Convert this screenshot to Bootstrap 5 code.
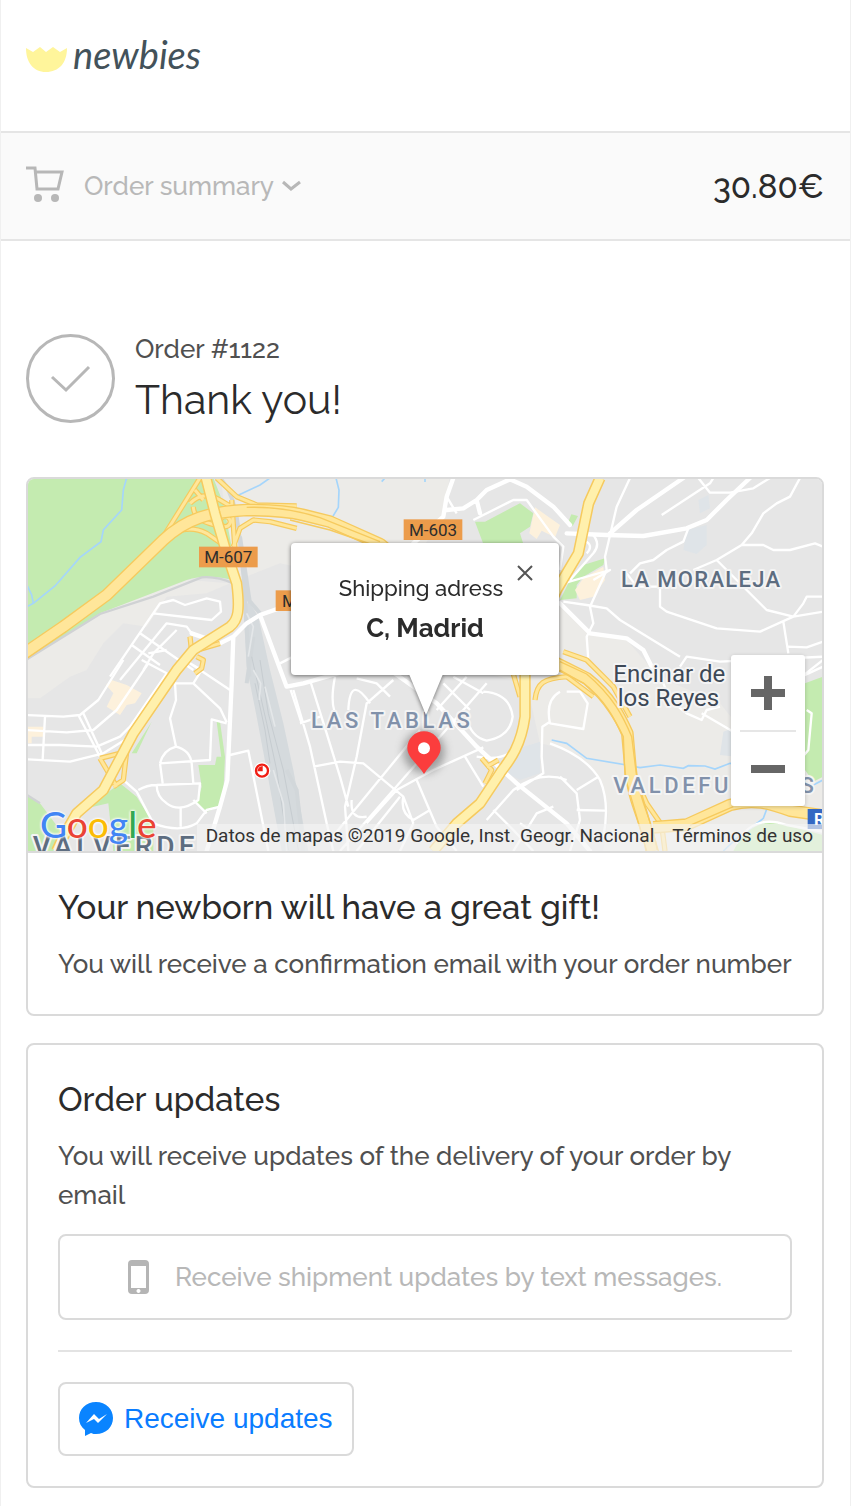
<!DOCTYPE html>
<html lang="en">
<head>
<meta charset="utf-8">
<meta name="viewport" content="width=device-width, initial-scale=1">
<title>newbies – Thank you!</title>
<link href="https://cdn.jsdelivr.net/npm/bootstrap@5.3.0/dist/css/bootstrap.min.css" rel="stylesheet">
<style>
  :root { --line: #dadada; --muted: #b8b8b8; --ink: #2b2b2b; --soft: #505050; }
  body { font-family: Raleway, Lato, sans-serif; font-size: 26px; font-weight: 500; line-height: 39px; color: var(--soft); background: #fff; }
  .page { border: solid #f0f0f0; border-width: 0 1px; min-height: 100vh; }
  .gutter { padding-left: 25px; padding-right: 26px; }
  .site-head { height: 131px; padding-top: 26px; }
  .brand { color: #43525a; font: italic 400 38px/56px Lato, cursive; gap: 6px; }
  .brand svg { margin-top: 12px; }
  .order-bar { background: #fafafa; border: solid #e5e5e5; border-width: 2px 0; height: 110px; }
  .order-bar .toggle { color: var(--muted); gap: 20px; background: none; border: 0; padding: 0; font-weight: 500; }
  .order-bar .cart { margin-bottom: 6px; }
  .price { font-size: 33px; color: var(--ink); }
  .thanks { padding-top: 93px; padding-bottom: 47px; gap: 20px; }
  .thanks .order-no { line-height: 30px; }
  .thanks h1 { font-size: 41px; line-height: 60px; color: var(--ink); font-weight: 400; margin: 6px 0 0; }
  .panel { border: 2px solid var(--line); border-radius: 8px; overflow: hidden; }
  .panel + .panel { margin-top: 27px; }
  .panel-pad { padding: 30px; }
  .panel h2 { font-size: 33px; line-height: 50px; color: var(--ink); font-weight: 500; margin: 0 0 12px; }
  .map { height: 374px; border-bottom: 2px solid var(--line); background: #e6e6e6; }
  .map-art { width: 100%; height: 100%; display: block; font-family: Roboto, sans-serif; font-weight: 400; }
  .bubble { left: 50%; top: 64px; width: 268px; height: 132px; transform: translateX(-50%); background: #fff; border-radius: 4px; padding-top: 27px; color: var(--ink); font-size: 22px; line-height: 36px; filter: drop-shadow(0 1px 2px rgba(0,0,0,.55)); }
  .bubble .street { padding-right: 8px; }
  .bubble strong { font-size: 26px; line-height: 44px; font-weight: 700; }
  .bubble .tail { left: 118px; top: 131px; }
  .bubble .shut { top: 22px; right: 26px; width: 16px; height: 16px; }
  .bare { background: none; border: 0; padding: 0; display: flex; align-items: center; justify-content: center; }
  .zoomer { right: 17px; bottom: 45px; width: 74px; background: #fff; border-radius: 3px; box-shadow: 0 1px 4px rgba(0,0,0,.2); padding: 0 9px; }
  .zoomer .bare { width: 100%; height: 75px; }
  .zoomer .bare + .bare { border-top: 2px solid #e6e6e6; height: 76px; }
  .g-logo { left: 12px; bottom: 4px; font: 500 37px/46px Lato, sans-serif; text-shadow: 0 0 3px #fff, 0 0 3px #fff, 0 0 2px #fff; }
  .credit { font: 400 19px/24px Roboto, sans-serif; color: #333; background: rgba(245,245,245,.65); padding: 0 9px 3px; gap: 18px; right: 0; bottom: 0; }
  .credit a { color: inherit; text-decoration: none; }
  .btn-box { border: 2px solid var(--line); border-radius: 8px; background: #fff; }
  .btn-sms { height: 86px; margin-top: 19px; color: var(--muted); gap: 26px; font-weight: 500; }
  .rule { height: 2px; background: #e3e3e3; margin: 30px 0; }
  .btn-msg { height: 74px; padding: 0 19px; color: #0a7cff; font: 400 28px/40px "Liberation Sans", Arial, sans-serif; gap: 11px; }
</style>
</head>
<body>
<div class="page">
  <header class="site-head gutter">
    <a href="#" class="brand d-inline-flex align-items-center text-decoration-none" aria-label="newbies">
      <svg width="41" height="26" viewBox="0 0 41 26" aria-hidden="true"><path d="M0 1 7 5 14 0 20 5 27 0 34 5 41 1C41 16 33 25 20 25S0 15 0 1Z" fill="#fff59b"/></svg>
      <span>newbies</span>
    </a>
  </header>

  <section class="order-bar gutter d-flex align-items-center justify-content-between">
    <button type="button" class="toggle d-flex align-items-center">
      <svg class="cart" width="38" height="37" viewBox="0 0 38 37" fill="none" stroke="#b7b7b7" stroke-width="3" aria-hidden="true"><path d="M0 3H9L11 24H32L36 7H9"/><circle cx="12" cy="33" r="4" fill="#b7b7b7" stroke="none"/><circle cx="29" cy="33" r="4" fill="#b7b7b7" stroke="none"/></svg>
      <span class="d-flex align-items-center gap-2">Order summary
        <svg width="19" height="12" viewBox="0 0 19 12" fill="none" stroke="#b7b7b7" stroke-width="3" aria-hidden="true"><path d="M1 2 9 9 18 2"/></svg></span>
    </button>
    <span class="price">30.80€</span>
  </section>

  <main class="gutter pb-3">
    <section class="thanks d-flex align-items-start">
      <svg width="89" height="89" viewBox="0 0 89 89" fill="none" stroke="#b7b7b7" stroke-width="3" aria-hidden="true"><circle cx="44.500" cy="44.500" r="43"/><path d="M26 43 40 56 63 33"/></svg>
      <div><div class="order-no">Order #1122</div><h1>Thank you!</h1></div>
    </section>

    <section class="panel">
      <div class="map position-relative overflow-hidden">
        <svg class="map-art" viewBox="21 27 2388 1116" preserveAspectRatio="xMidYMid slice" aria-label="Map of northern Madrid">
          <defs>
            <path id="ramps" d="M540 24 430 200M590 24 650 80 710 105 830 108M440 200Q500 160 560 190L625 235M640 230 660 175 700 150 750 155 830 175M510 100Q550 60 600 90L650 120M525 60 550 90M520 110Q520 150 585 165M635 90 645 240M615 140a15 15 0 1 0 1 0M510 500 515 545 600 520M530 560 550 570 545 595 525 610M240 865 320 845 310 930 280 950M240 865 290 950M1385 865 1415 900 1395 940M1435 870 1400 890M1545 690C1550 640 1570 625 1640 620L1720 680M1630 545 1700 570 1780 650 1830 740M1820 870 1880 1000 1925 1065 1935 1143M1480 612 1500 680"/>
            <path id="ring" d="M10 552 130 470 260 375 430 210C500 145 570 125 680 120 740 120 810 125 850 135L930 155 1080 222 1400 480 1620 585 1700 625C1770 680 1800 740 1822 790L1832 900C1840 1000 1880 1050 1895 1143M1900 1072 2000 1064 2130 1005C2200 985 2250 1000 2310 1022L2400 1035"/>
            <path id="radial" d="M558 24 585 130 620 250 650 340C660 420 655 450 630 470L520 540 470 600 340 790 250 960 170 1030 130 1100 110 1143M1740 24 1706 100 1675 250 1610 360 1515 560V740C1500 850 1450 890 1440 910L1380 1000 1310 1060 1240 1143"/>
          </defs>
          <rect x="-500" width="3500" height="1200" fill="#e6e6e6"/>
          <g fill="#ecebe8">
            <path d="M600 0H1290L1280 110 1250 170 1190 260 830 290 780 280 640 335Z"/>
            <path d="M21 570 240 430 500 330 630 340 560 370 440 380 380 470 310 460 250 520 200 600 150 620 60 685H21Z"/>
            <path d="M1400 560 1610 400 1710 490 1820 510 1890 590 1960 640 2100 700 2140 750 2409 760V1143H1750Q1780 1000 1740 930 1700 850 1560 820L1520 640 1400 610Z"/>
          </g>
          <g fill="#dfe4e8"><path d="M2110 785 2150 770V860L2100 855ZM2000 180 2060 165V225L2030 252 1990 240ZM1480 840 1560 815V910L1500 930 1460 910ZM2035 90l30-15 5 40-30 15Z"/></g>
          <g fill="#c4ebb0">
            <path d="M21 24H580L610 100 655 335Q570 308 500 330L240 430 21 570Z"/>
            <path d="M1365 155H1395L1500 100 1540 130 1530 170 1500 190 1510 222H1390Z"/>
            <path d="M1690 285 1755 265 1750 285 1690 320 1670 345V385L1620 390 1650 330ZM1658 168l-14-10 10-25 20 5Z"/>
            <path d="M200 1015 300 940 350 980 400 1060V1143H280L265 1000ZM21 978 60 1000 120 1080 110 1143H21ZM535 885H585L590 860H615L610 970 600 1010 560 1025 530 1000 545 950ZM590 755H600L615 860 605 870ZM395 755 350 850H335Z"/>
            <path d="M2355 640 2409 620V920L2380 935 2355 900ZM2140 1143Q2180 1060 2260 1055L2409 1095V1143Z"/>
          </g>
          <g fill="#fdf1dc"><path d="M1545 112 1620 165 1605 202 1565 182 1550 207 1528 190ZM1690 325 1750 290 1755 330 1720 380 1680 390 1665 360ZM275 630 320 645 365 670 345 700 320 705 300 735 260 710 280 670 258 645ZM21 770H70V800H35V820H21Z"/></g>
          <g fill="none" stroke="#d0d2d4" stroke-width="7"><path d="M21 568 240 432 400 380 545 322Q590 318 640 340M21 975 60 1000"/></g>
          <path d="M690 400 715 440 750 600 790 760 820 900 865 1143H785L740 900 710 740 680 590 670 400Z" fill="#d5dadd"/>
          <g fill="none" stroke="#d2d7da" stroke-width="12"><path d="M600 24C660 90 655 200 672 330L688 620M660 200 690 400M670 370 720 430M700 500 680 640M800 900 830 960 850 1143"/></g>
          <g fill="none" stroke="#c6ccd0" stroke-width="3"><path d="M695 560 740 760 770 900 805 1140M720 570 745 730 790 900 835 1140M705 640 735 780 750 880"/></g>
          <g fill="none" stroke="#e4e7e9" stroke-width="5"><path d="M680 430 700 470 685 560M700 600 722 640 718 690M735 650 765 770M760 900 790 1000 800 1143"/></g>
          <g fill="none" stroke="#a5d5fb" stroke-width="5"><path d="M320 24 310 60 305 120 250 180 243 215 180 262 105 348 40 400 21 410M21 345 35 375 40 400M750 24 720 45 645 80M948 24 957 60 955 112 935 145M1085 35 1095 24M1215 24V36M1595 810 1640 820 1700 865 1820 885 1860 893 1920 885 1990 895 2005 887 2055 888 2085 897 2130 880 2200 885M2409 930 2380 945M2240 1018 2230 1045 2150 1105 2110 1143"/></g>

          <g fill="none" stroke="#fff" stroke-width="7" stroke-linejoin="round">
            <path d="M270 620 420 400 460 390 495 405 560 385 600 395 603 425 575 450 400 430M300 630 440 460 500 470 515 490M360 490 520 600M335 525 420 585M385 550 440 540 M370 600 400 550 470 480"/>
            <path d="M780 580 820 560M310 570 235 690 180 735 130 740 21 735M365 570 440 610 330 770 300 800 230 830 120 825 21 825M385 580 290 720 220 780 140 787 21 780M330 800 250 850 150 875 21 868M75 740 68 868M175 735 240 860M190 730 245 850"/>
            <path d="M465 640H520L600 715 620 757M520 640 545 600 510 580 630 660M465 640 468 690 450 745 468 830M420 880Q430 840 468 830 510 840 515 880L520 940M420 880 570 870 575 748 620 760M420 880 428 940M355 960Q380 945 410 945L540 940 535 990Q480 1030 440 1000 410 980 410 945M310 930 350 965 400 1060Q480 1090 530 1060L560 1020 600 1010M482 1010V1070M520 990 560 1030M630 855 685 842 745 1143M812 660 845 760"/>
            <path d="M820 660 870 830 920 1060 940 1143M870 630 920 790 960 920 985 1010M945 620Q925 720 960 750M1050 700Q990 610 985 720M1010 625 1070 640 1110 680M1120 630 1040 700 1010 860 975 1010 985 1143M1200 780 930 1110M1260 800 960 1143M1130 960 1040 1060M1140 980 1010 1143M840 760 900 740M880 890 960 875 1030 880 1150 980 1180 1060M1130 960 1240 900 1390 832M1190 930 1250 1070 1310 1143M1150 980Q1140 1030 1180 1050L1230 1020M995 990Q990 1050 1040 1040M1335 860 1390 950M1180 1060 1140 1143"/>
            <path d="M1270 640 1350 720M1300 620 1390 670M1340 620 1250 720M1400 640 1260 800M1390 665Q1470 670 1478 740 1470 800 1400 812 1350 800 1340 740M1370 860Q1480 880 1500 800M1400 1050 1480 960Q1560 900 1640 930M1420 1020 1480 1080 1540 1143M1480 1143 1550 1030 1600 1010M1500 1060 1560 1100M1620 665Q1575 690 1590 760L1690 777 1703 700 1680 665 1640 665M1590 755 1567 770 1565 860 1570 910 1490 960"/>
            <path d="M1590 820Q1700 860 1740 930 1770 1000 1750 1100M1620 920 1670 970 1680 1050 1650 1143M1670 960 1735 920M1670 1020 1755 1022M1360 150 1480 90 1520 90 1600 200 1630 230 1620 300M1280 80 1310 130"/>
            <path d="M1830 24 1790 110 1755 260 1760 300 1710 410 1720 460 1700 500 1705 570M1925 135 2070 40 2080 24M2035 24 2070 68 2130 68 2200 55 2250 24M2340 24 2310 80 2270 100 2230 130 2195 190 2165 225 2090 270 2020 300M2165 225H2230L2260 240 2310 240 2385 220 2409 230M2090 270 2120 300 2240 420 2320 440 2409 425M2320 440 2350 400 2360 380H2409M2320 440 2220 485 2090 475 1940 425 1920 410V350H1850L1820 310M2290 455 2305 550M2305 530 2360 532 2409 515M2005 175 1990 215 1940 240 1900 270 1860 280 1830 310M1630 395 1700 405 1760 415 1800 450 1980 560M1980 590 2000 560 2100 575 2409 560M2409 590 2300 640"/>
            <path d="M1900 600 1930 640 1950 690 2000 730 2045 750 2060 720 2100 710M2045 730 2140 785M2360 720 2375 730 2365 840 2340 870M2409 570 2320 640M1630 340 1770 300 1720 330M1715 190Q1745 220 1720 250L1650 330M1700 215Q1720 230 1700 250M2150 1120Q2200 1030 2300 1065L2409 1085"/>
          </g>
          <g fill="none" stroke="#fff" stroke-width="13" stroke-linejoin="round" stroke-linecap="round">
            <path d="M515 490 600 520 640 500 680 460 720 435 820 400M640 500 635 640 622 930 600 1010 560 1143M720 435 800 650 850 640 990 600"/>
            <path d="M1110 600 1250 700 1370 830 1490 940 1640 1060 1710 1143M1300 24 1280 80 1270 140 1180 220M1280 120 1330 115 1370 90 1400 60 1470 28 1520 50 1600 110 1650 165M1370 90l10 40M1640 190 1760 195 1870 198 2000 175 2060 150 2120 90 2190 24M1770 190 1850 120 1990 24M1620 400 1710 490 1820 505 1870 540 1900 600"/>
          </g>
          <g fill="none" stroke-linejoin="round">
            <use href="#ramps" stroke="#f6ca5e" stroke-width="16"/>
            <use href="#ramps" stroke="#ffe69a" stroke-width="9"/>
            <use href="#ring" stroke="#f6ca5e" stroke-width="38"/>
            <use href="#ring" stroke="#ffe69a" stroke-width="30"/>
            <use href="#radial" stroke="#f6ca5e" stroke-width="34"/>
            <use href="#radial" stroke="#fff0ac" stroke-width="25"/>
            <path d="M680 112C760 110 830 120 900 143L1080 215M810 150 930 180 1060 225M1620 575 1700 612C1780 680 1810 740 1835 800L1850 920 1915 1143M1620 600 1690 640C1760 700 1790 760 1810 800L1815 920 1880 1143M2010 1066 2140 1010" stroke="#f6ca5e" stroke-width="4"/>
          </g>

          <g font-size="51" fill="#2d2d2d" text-anchor="middle">
            <rect x="537" y="230" width="176" height="62" fill="#ec9c4b"/><text x="625" y="279">M-607</text>
            <rect x="1151" y="148" width="176" height="62" fill="#ec9c4b"/><text x="1239" y="197">M-603</text>
            <rect x="767" y="361" width="80" height="62" fill="#ec9c4b"/><text x="808" y="410">M</text>
            <rect x="2363" y="1017" width="70" height="60" fill="#3468c3"/><text x="2398" y="1066" fill="#fff" font-weight="700">R</text>
          </g>
          <g stroke="#f4f4f4" stroke-width="12" stroke-linejoin="round" style="paint-order:stroke">
            <g font-size="66" font-weight="500">
              <text x="1803" y="350" fill="#5d6d80" letter-spacing="4">LA MORALEJA</text>
              <text x="873" y="775" fill="#8191aa" letter-spacing="11">LAS TABLAS</text>
              <text x="1780" y="970" fill="#8191aa" letter-spacing="11">VALDEFUENTES</text>
              <text x="38" y="1157" fill="#5d6d80" font-size="84" letter-spacing="12">VALVERDE</text>
            </g>
            <g font-size="72" fill="#3d4856"><text x="1780" y="636">Encinar de</text><text x="1793" y="708">los Reyes</text></g>
          </g>
          <circle cx="726" cy="902" r="25" fill="#fff"/><circle cx="726" cy="902" r="18" fill="none" stroke="#f01e14" stroke-width="7"/><path d="M728 904V888A18 18 0 0 0 712 904Z" fill="#f01e14"/>
          <ellipse cx="1212" cy="845" rx="62" ry="64" fill="#555" opacity=".5" style="filter:blur(12px)"/>
          <path d="M1212 912C1190 878 1162 862 1162 834a50 50 0 0 1 100 0c0 28-28 44-50 78Z" fill="#fb3d3d"/><circle cx="1212" cy="835" r="18" fill="#fff"/>
        </svg>

        <div class="bubble position-absolute text-center">
          <svg class="tail position-absolute" width="34" height="42" viewBox="0 0 34 42" aria-hidden="true"><path d="M0 0H34L17 41Z" fill="#fff"/></svg>
          <button type="button" class="shut bare position-absolute" aria-label="Close"><svg width="16" height="16" viewBox="0 0 16 16" stroke="#555" stroke-width="2"><path d="M1 1 15 15M15 1 1 15"/></svg></button>
          <div class="street">Shipping adress</div>
          <strong class="d-block">C, Madrid</strong>
        </div>

        <div class="zoomer position-absolute">
          <button type="button" class="bare" aria-label="Zoom in"><svg width="34" height="34" fill="#666"><path d="M13 0h8v13h13v8H21v13h-8V21H0v-8h13Z"/></svg></button>
          <button type="button" class="bare" aria-label="Zoom out"><svg width="34" height="8" fill="#666"><path d="M0 0h34v8H0Z"/></svg></button>
        </div>

        <div class="g-logo position-absolute"><span style="color:#4285f4">G</span><span style="color:#ea4335">o</span><span style="color:#fbbc05">o</span><span style="color:#4285f4">g</span><span style="color:#34a853">l</span><span style="color:#ea4335">e</span></div>
        <div class="credit position-absolute d-flex text-nowrap"><span>Datos de mapas ©2019 Google, Inst. Geogr. Nacional</span><a href="#">Términos de uso</a></div>
      </div>
      <div class="panel-pad">
        <h2>Your newborn will have a great gift!</h2>
        <p class="mb-0">You will receive a confirmation email with your order number</p>
      </div>
    </section>

    <section class="panel panel-pad">
      <h2>Order updates</h2>
      <p class="mb-0">You will receive updates of the delivery of your order by email</p>
      <button type="button" class="btn-box btn-sms w-100 d-flex align-items-center justify-content-center">
        <svg width="21" height="34" viewBox="0 0 21 34" aria-hidden="true"><path fill="#b5b5b5" fill-rule="evenodd" d="M4 0H17Q21 0 21 4V30Q21 34 17 34H4Q0 34 0 30V4Q0 0 4 0ZM3 6V28H18V6ZM10 29a2 2 0 1 0 1 0Z"/></svg>
        Receive shipment updates by text messages.
      </button>
      <div class="rule"></div>
      <button type="button" class="btn-box btn-msg d-flex align-items-center">
        <svg width="34" height="34" viewBox="0 0 34 34" aria-hidden="true"><path fill="#0a84ff" d="M17 0C7 0 0 7 0 16c0 5 2 9 6 12v6l6-3c2 1 3 1 5 1 10 0 17-7 17-16S27 0 17 0Z"/><path fill="#fff" d="M7 21 15 12l5 5 8-5-9 9-4-4Z"/></svg>
        Receive updates
      </button>
    </section>
  </main>
</div>
<script src="https://cdn.jsdelivr.net/npm/bootstrap@5.3.0/dist/js/bootstrap.bundle.min.js"></script>
</body>
</html>
